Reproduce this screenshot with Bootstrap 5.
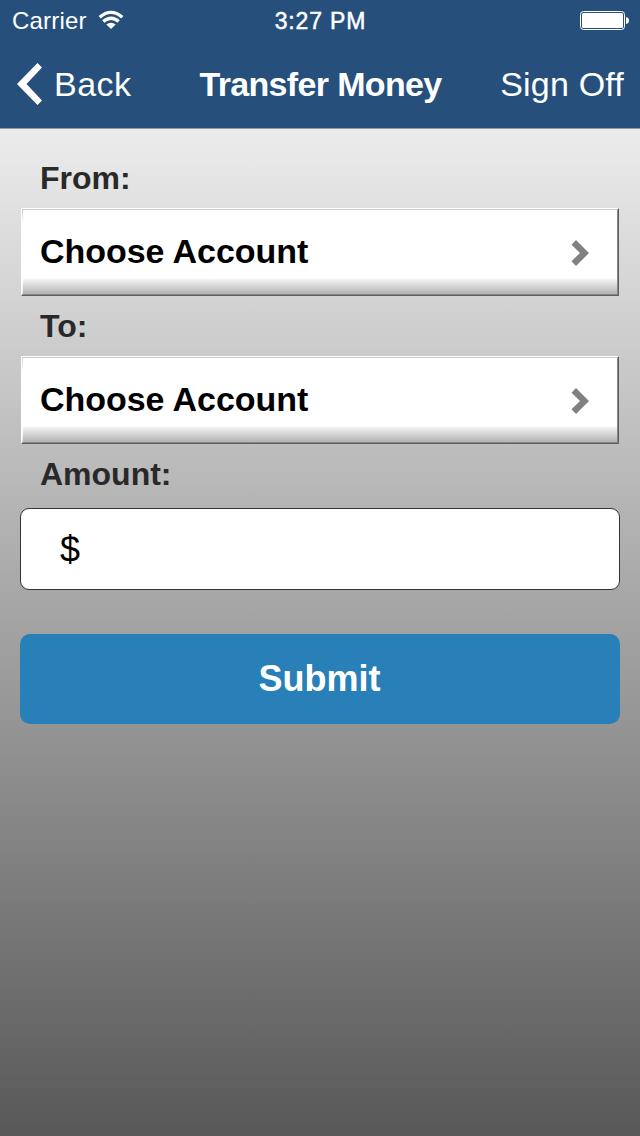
<!DOCTYPE html>
<html lang="en">
<head>
<meta charset="utf-8">
<meta name="viewport" content="width=device-width, initial-scale=1">
<title>Transfer Money</title>
<link href="https://cdn.jsdelivr.net/npm/bootstrap@5.3.0/dist/css/bootstrap.min.css" rel="stylesheet">
<style>
  body { font-family: "Liberation Sans", Arial, sans-serif; color: #000; background: #585858; }
  svg { display: block; flex: none; }
  .screen { height: 1136px; background: linear-gradient(#ececec 128px, #585858); }
  .top-area { height: 129px; background: #26507b; border-bottom: 1px solid #93999f; color: #fff; }
  .status-bar { height: 40px; font-size: 24px; line-height: 38px; padding: 0 11px 0 12px; }
  .status-bar span { padding-top: 2px; }
  .title-bar { height: 88px; font-size: 34px; line-height: 88px; padding: 0 16px 0 17px; }
  .side { flex: 1 1 0; }
  .carrier { letter-spacing: .2px; }
  .wifi { margin-left: 11px; }
  .back-text { margin-left: 12px; letter-spacing: .5px; }
  .off-text { letter-spacing: .2px; }
  .clock { font-size: 23px; -webkit-text-stroke: .5px #fff; letter-spacing: .85px; }
  .page-title { font-size: 34px; font-weight: 700; letter-spacing: -.65px; }
  .form-area { padding: 19px 20px 0; }
  .field-label { height: 60px; line-height: 60px; padding-left: 20px; font-size: 32px; font-weight: 700; color: #292929; }
  .picker { height: 88px; margin: 0 1px; padding: 0 28px 1px 18px; width: calc(100% - 2px);
    font-size: 34px; font-weight: 700; color: #000; border: 1px solid; border-color: #fff #5f5f5f #5f5f5f #fff; border-radius: 0;
    background: linear-gradient(#fff 69px, #f0f0f0 71px, #b3b3b3 85px); position: relative; }
  .picker span { letter-spacing: -.05px; }
  .picker svg { margin-top: 3px; }
  .picker::before { content: ""; position: absolute; inset: 0; border: 1px solid; border-color: #ccc #858585 #858585 transparent; pointer-events: none; }
  .picker::after { content: ""; position: absolute; left: 0; top: 0; width: 1px; height: 85px; background: linear-gradient(#ccc, #fff 15px, #fff 68px, #fff9); }
  .amount-box { height: 82px; margin-top: 4px; padding: 0 39px; font-size: 36px; color: #000; background: #fff; border: 1px solid #333; border-radius: 9px; }
  .amount-box span { line-height: 82px; }
  .submit-btn { height: 90px; margin-top: 44px; padding: 0 1px 0 0; font-size: 36px; font-weight: 700; line-height: 90px;
    color: #fff; background: #2980b9; border: 0; border-radius: 10px; }
</style>
</head>
<body>
<div class="screen">
  <header class="top-area">
    <div class="status-bar d-flex align-items-center">
      <div class="side d-flex align-items-center">
        <span class="carrier">Carrier</span>
        <svg class="wifi" width="26" height="20" viewBox="0 0 26 20" fill="none" stroke="#fff" stroke-width="3.3">
          <path d="M1.7 7.3Q13 -2.6 24.3 7.3"/><path d="M5.3 11.6Q13 5 20.7 11.6"/>
          <path d="M8.3 14.4Q13 11 17.7 14.4L13 19Z" fill="#fff" stroke="none"/>
        </svg>
      </div>
      <span class="clock">3:27 PM</span>
      <div class="side d-flex justify-content-end">
        <svg width="49" height="19" viewBox="0 0 49 19">
          <rect x=".5" y=".5" width="44" height="18" rx="3" fill="none" stroke="#fff"/>
          <rect x="2" y="2" width="41" height="15" rx="1.5" fill="#fff"/>
          <path d="M46 6q3 .5 3 3.5T46 13Z" fill="#fff"/>
        </svg>
      </div>
    </div>
    <nav class="title-bar d-flex align-items-center" aria-label="Main">
      <a href="#" class="side d-flex align-items-center text-white text-decoration-none">
        <svg width="25" height="42" viewBox="0 0 25 42"><path d="M20.5 0L25 4.5L9.5 21L25 37.5L20.5 42L0 21Z" fill="#fff"/></svg>
        <span class="back-text">Back</span>
      </a>
      <span class="page-title">Transfer Money</span>
      <a href="#" class="side text-end text-white text-decoration-none off-text">Sign Off</a>
    </nav>
  </header>

  <main class="form-area">
    <div class="field-label">From:</div>
    <button type="button" class="picker d-flex align-items-center justify-content-between">
      <span>Choose Account</span>
      <svg width="19" height="26" viewBox="0 0 19 26"><path d="M5 0L18 13L5 26L.5 21.3L9 13L.5 4.7Z" fill="#808080"/></svg>
    </button>
    <div class="field-label">To:</div>
    <button type="button" class="picker d-flex align-items-center justify-content-between">
      <span>Choose Account</span>
      <svg width="19" height="26" viewBox="0 0 19 26"><path d="M5 0L18 13L5 26L.5 21.3L9 13L.5 4.7Z" fill="#808080"/></svg>
    </button>
    <div class="field-label">Amount:</div>
    <div class="amount-box"><span>$</span></div>
    <button type="button" class="submit-btn btn w-100 d-block">Submit</button>
  </main>
</div>
<script src="https://cdn.jsdelivr.net/npm/bootstrap@5.3.0/dist/js/bootstrap.bundle.min.js"></script>
</body>
</html>
